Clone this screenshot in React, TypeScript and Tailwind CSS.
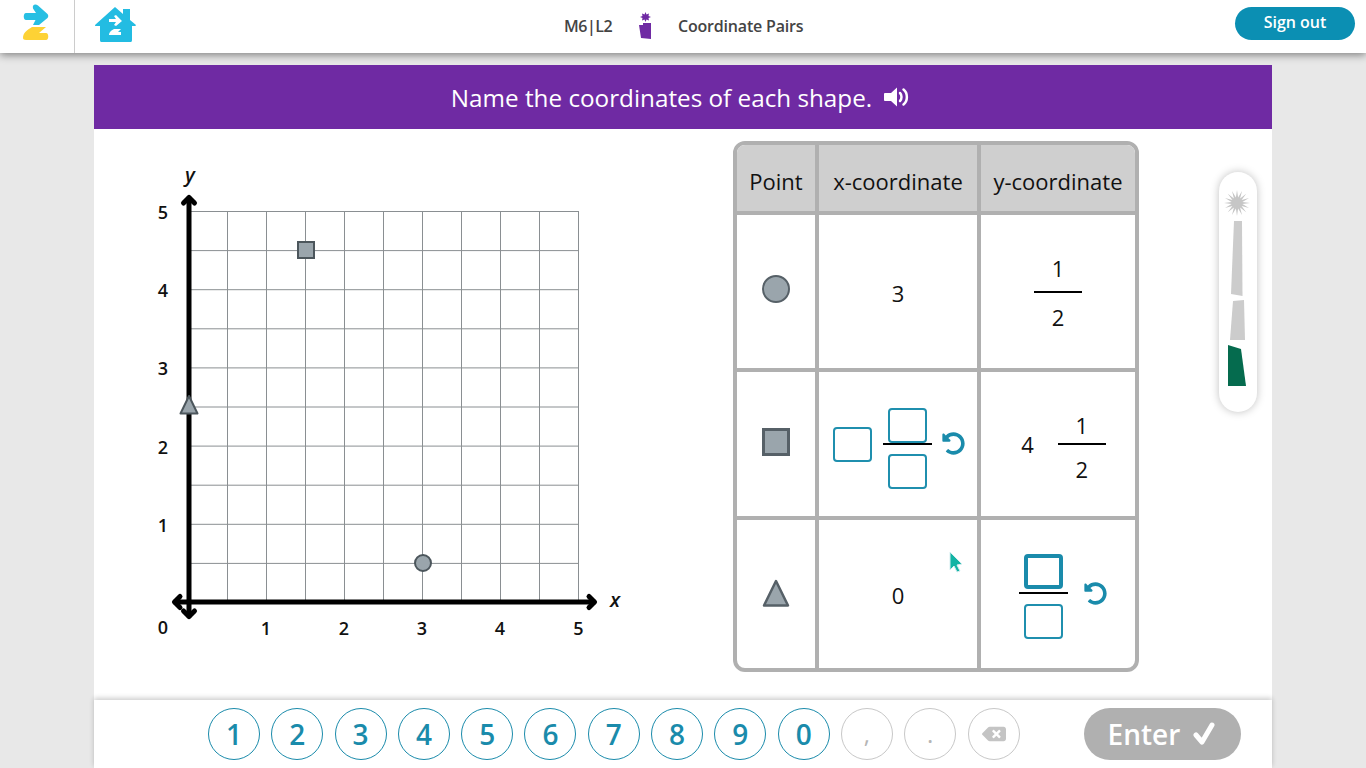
import { FaUndoAlt, FaBackspace } from 'react-icons/fa'

const keys = ['1', '2', '3', '4', '5', '6', '7', '8', '9', '0']

// 16 point burst for the top of the progress meter
const burstPoints = Array.from({ length: 32 }, (_, i) => {
  const r = i % 2 === 0 ? 13 : 5.5
  const a = (i * Math.PI) / 16
  return `${(18 + r * Math.sin(a)).toFixed(1)},${(31 - r * Math.cos(a)).toFixed(1)}`
}).join(' ')

function Logo() {
  return (
    <svg width="30" height="40" viewBox="0 0 30 40">
      <path d="M5 11 H15 L12 6.500 C11 3 14 1.500 17 3.500 L26.500 12 C27.500 13 27.500 15 26.500 16 L18 23 H12 L14.500 18 H5 C2 18 2 11 5 11 Z" fill="#27bfe3" />
      <path d="M2 36 C2 31 6 28 11 25 H25 L18 31 H25 C28 31 28 38 25 38 H5 C3 38 2 37 2 36 Z" fill="#fdd235" />
    </svg>
  )
}

function House() {
  return (
    <svg width="42" height="35" viewBox="0 0 42 35">
      <path d="M0 18 L20 0 L28 7 V2 H35 V13 L41 18 C41 19 40 19 37 19 V33 C37 35 36 35 35 35 H7 C6 35 5 35 5 33 V19 H2 C0 19 0 19 0 18 Z" fill="#23bce2" />
      <path d="M14 12 H21 L19 9 L21 8 L27 14 L21 19 L19 18 L21 15 H14 Z" fill="#fff" />
      <path d="M14 28 C14 25 17 23 19 22 H26 L23 25 H26 V28 Z" fill="#fff" />
    </svg>
  )
}

function Pen() {
  return (
    <svg width="14" height="28" viewBox="0 0 14 28">
      <path d="M7.500 0 L8.500 2.500 L11 1.500 L10.500 4 L13 5 L10.500 6 L11 8.500 L8.500 7.500 L7.500 10 L6.500 7.500 L4 8.500 L4.500 6 L2 5 L4.500 4 L4 1.500 L6.500 2.500 Z" fill="#6f2aa3" />
      <path d="M5 11 H13 V27 L3 26 L1 13 H5 Z" fill="#6f2aa3" />
    </svg>
  )
}

function Speaker() {
  return (
    <svg width="25" height="20" viewBox="0 0 25 20" className="mb-[3px]">
      <path d="M1 6 H7 L13 0.500 V19.500 L7 14 H1 C0.500 14 0 13.500 0 13 V7 C0 6.500 0.500 6 1 6 Z" fill="#fff" />
      <path d="M16 6 C18 8 18 12 16 14" stroke="#fff" strokeWidth="2.500" fill="none" strokeLinecap="round" />
      <path d="M19.500 2.500 C24 6 24 14 19.500 17.500" stroke="#fff" strokeWidth="2.500" fill="none" strokeLinecap="round" />
    </svg>
  )
}

function Graph() {
  const xs = [1, 2, 3, 4, 5, 6, 7, 8, 9, 10]
  const labelStyle = { fontFamily: '"Open Sans", sans-serif', fontSize: 18, fontWeight: 600 }
  return (
    <svg width="480" height="485" viewBox="145 155 480 485" className="shrink-0">
      {xs.map((i) => (
        <line key={`v${i}`} x1={188.5 + 39 * i} y1="211" x2={188.5 + 39 * i} y2="602" stroke="#8a8f92" strokeWidth="1" />
      ))}
      {xs.map((i) => (
        <line key={`h${i}`} x1="189" y1={602.500 - 39.100 * i} x2="578.500" y2={602.500 - 39.100 * i} stroke="#8a8f92" strokeWidth="1" />
      ))}
      <g stroke="#000" strokeWidth="5" fill="none" strokeLinecap="round" strokeLinejoin="round">
        <line x1="189" y1="198" x2="189" y2="616" />
        <line x1="175" y1="602" x2="594" y2="602" />
        <path d="M183.500 203 L189 197.500 L194.500 203" />
        <path d="M183.500 611 L189 616.500 L194.500 611" />
        <path d="M180 596.500 L174.500 602 L180 607.500" />
        <path d="M589 596.500 L594.500 602 L589 607.500" />
      </g>
      <g style={labelStyle} fill="#111" textAnchor="middle">
        <text x="163" y="219">5</text>
        <text x="163" y="297">4</text>
        <text x="163" y="375">3</text>
        <text x="163" y="454">2</text>
        <text x="163" y="532">1</text>
        <text x="163" y="634">0</text>
        <text x="266" y="635">1</text>
        <text x="344" y="635">2</text>
        <text x="422" y="635">3</text>
        <text x="500" y="635">4</text>
        <text x="578.500" y="635">5</text>
        <text x="190" y="182" fontStyle="italic" fontSize="20">y</text>
        <text x="615" y="607" fontStyle="italic" fontSize="20">x</text>
      </g>
      <circle cx="423" cy="563" r="8" fill="#9aa5ac" stroke="#4c565c" strokeWidth="2" />
      <rect x="298" y="242" width="16" height="16" fill="#9aa5ac" stroke="#4c565c" strokeWidth="2" />
      <path d="M189 396 L197.500 413.500 H180.500 Z" fill="#9aa5ac" stroke="#4c565c" strokeWidth="2" strokeLinejoin="round" />
    </svg>
  )
}

function Box({ focused }: { focused?: boolean }) {
  return (
    <div className={`w-[39px] h-[35px] rounded-[4px] bg-white ${focused ? 'border-[4px] border-[#1a8bab]' : 'border-2 border-[#1f8fae]'}`} />
  )
}

function Undo() {
  return <FaUndoAlt className="text-[#1a8bab] w-[23px] h-[23px] mb-[2px]" />
}

function BoxFraction({ focused }: { focused?: boolean }) {
  return (
    <div className={`flex flex-col items-center w-[49px] ${focused ? 'mt-[4px]' : 'mt-[8px]'}`}>
      <Box focused={focused} />
      <div className={`w-full h-[2px] bg-black ${focused ? 'mt-[3px] mb-[10px]' : 'mb-[9px]'}`} />
      <Box />
    </div>
  )
}

function NumFraction({ compact }: { compact?: boolean }) {
  return (
    <div className={`flex flex-col items-center w-[48px] text-[22px] leading-[30px] ${compact ? 'mt-[5px]' : 'mt-[2px]'}`}>
      <span>1</span>
      <div className={`w-full h-[2px] bg-black ${compact ? 'mt-[3px] mb-[9px]' : 'mt-[8px] mb-[9px]'}`} />
      <span>2</span>
    </div>
  )
}

function Cell({ children, last, bottom, className = '' }: { children?: React.ReactNode; last?: boolean; bottom?: boolean; className?: string }) {
  return (
    <div className={`flex items-center justify-center ${last ? '' : 'border-r-4'} ${bottom ? '' : 'border-b-4'} border-[#b0b0b0] ${className}`}>
      {children}
    </div>
  )
}

function CoordinateTable() {
  return (
    <div className="relative w-[406px] h-[531px] ml-[108px] mt-[12px] shrink-0 border-4 border-[#b0b0b0] rounded-[12px] overflow-hidden grid grid-cols-[82px_162px_154px] grid-rows-[70px_157px_148px_148px] text-[22px] text-[#111]">
      <Cell className="bg-[#cfcfcf] pt-[6px]">Point</Cell>
      <Cell className="bg-[#cfcfcf] pt-[6px]">x-coordinate</Cell>
      <Cell last className="bg-[#cfcfcf] pt-[6px]">y-coordinate</Cell>

      <Cell>
        <svg width="30" height="30" viewBox="0 0 30 30" className="mb-[6px]">
          <circle cx="15" cy="15" r="13" fill="#9aa5ac" stroke="#566067" strokeWidth="2" />
        </svg>
      </Cell>
      <Cell><span className="mt-[4px]">3</span></Cell>
      <Cell last><NumFraction /></Cell>

      <Cell>
        <div className="w-[28px] h-[28px] bg-[#9aa5ac] border-[3px] border-[#566067] mb-[4px]" />
      </Cell>
      <Cell>
        <div className="flex items-center ml-[2px]">
          <Box />
          <div className="ml-[11px]"><BoxFraction /></div>
          <div className="ml-[10px]"><Undo /></div>
        </div>
      </Cell>
      <Cell last>
        <div className="flex items-center ml-[11px]">
          <span>4</span>
          <div className="ml-[24px]"><NumFraction compact /></div>
        </div>
      </Cell>

      <Cell bottom>
        <svg width="30" height="30" viewBox="0 0 30 30" className="mb-[2px]">
          <path d="M15 3 L27 27.500 H3 Z" fill="#9aa5ac" stroke="#566067" strokeWidth="2.500" strokeLinejoin="round" />
        </svg>
      </Cell>
      <Cell bottom><span className="mt-[2px]">0</span></Cell>
      <Cell bottom last>
        <div className="flex items-center ml-[10px]">
          <BoxFraction focused />
          <div className="ml-[16px]"><Undo /></div>
        </div>
      </Cell>

      {/* mouse pointer over the table */}
      <svg width="16" height="24" viewBox="0 0 16 24" className="absolute left-[212px] top-[406px]">
        <path d="M1 1 L13 13 L8 14 L11 20 L8 21 L5 15 L1 19 Z" fill="#12b3a4" stroke="#d5eef0" strokeWidth="1" />
      </svg>
    </div>
  )
}

function ProgressMeter() {
  return (
    <div className="ml-[80px] mt-[43px] w-[38px] h-[240px] shrink-0 bg-white rounded-full shadow-[0_0_8px_rgba(0,0,0,0.25)]">
      <svg width="38" height="240" viewBox="0 0 38 240">
        <polygon points={burstPoints} fill="#c6c6c6" />
        <path d="M15 49 H23 L23.500 124 L12 122 Z" fill="#cccccc" />
        <path d="M14 129 L25 128 L26 168 L11 168 Z" fill="#cccccc" />
        <path d="M9 173 L22 177 L27 214 H9 Z" fill="#056b4e" />
      </svg>
    </div>
  )
}

export default function App() {
  return (
    <div className="h-screen overflow-hidden bg-[#e8e8e8] flex flex-col" style={{ fontFamily: '"Open Sans", sans-serif' }}>
      <header className="h-[53px] shrink-0 bg-white flex items-center shadow-[0_2px_8px_rgba(0,0,0,0.45)] relative z-10 text-[#444]">
        <div className="w-[75px] h-full border-r border-[#ccc] flex items-start pl-[21px] pt-[2px]">
          <Logo />
        </div>
        <div className="ml-[20px] mb-[4px]"><House /></div>
        <div className="ml-[427px] mb-[2px] flex items-center text-[16px] font-semibold">
          <span className="tracking-[-0.5px]">M6|L2</span>
          <div className="ml-[26px]"><Pen /></div>
          <span className="ml-[26px] tracking-[-0.2px]">Coordinate Pairs</span>
        </div>
        <button className="ml-auto mr-[11px] mb-[7px] pb-[2px] w-[120px] h-[33px] rounded-full bg-[#0b8fb3] text-white text-[16px] font-semibold">
          Sign out
        </button>
      </header>

      <main className="w-[1178px] ml-[94px] mt-[12px] flex-1 flex flex-col bg-white min-h-0">
        <div className="h-[64px] shrink-0 bg-[#6f2aa3] text-white text-[24.250px] pt-[2px] flex items-center justify-center gap-[12px] pr-[6px]">
          <span>Name the coordinates of each shape.</span>
          <Speaker />
        </div>

        <div className="flex-1 flex items-start pl-[51px] min-h-0">
          <div className="mt-[26px]"><Graph /></div>
          <CoordinateTable />
          <ProgressMeter />
        </div>

        <div className="h-[68px] shrink-0 flex items-center pl-[114px] shadow-[0_-2px_5px_rgba(0,0,0,0.2)] relative">
          <div className="flex gap-[11.300px]">
            {keys.map((k) => (
              <button key={k} className="w-[52px] h-[52px] rounded-full border border-[#1a8bab] text-[#1a8bab] text-[28px] font-semibold flex items-center justify-center">
                {k}
              </button>
            ))}
            <button className="w-[52px] h-[52px] rounded-full border border-[#c8c8c8] text-[#b5b5b5] text-[24px] flex items-center justify-center">,</button>
            <button className="w-[52px] h-[52px] rounded-full border border-[#c8c8c8] text-[#b5b5b5] text-[24px] flex items-center justify-center">.</button>
            <button className="w-[52px] h-[52px] rounded-full border border-[#c8c8c8] text-[#c4c4c4] flex items-center justify-center">
              <FaBackspace className="w-[24px] h-[24px]" />
            </button>
          </div>
          <button className="ml-[64px] w-[157px] h-[52px] pl-[24px] rounded-full bg-[#b0b0b0] text-white text-[28px] font-semibold flex items-center gap-[13px]">
            Enter
            <svg width="22" height="24" viewBox="0 0 22 24">
              <path d="M3 13 L9 20 L19 3" stroke="#fff" strokeWidth="5" fill="none" strokeLinecap="round" strokeLinejoin="round" />
            </svg>
          </button>
        </div>
      </main>
    </div>
  )
}
